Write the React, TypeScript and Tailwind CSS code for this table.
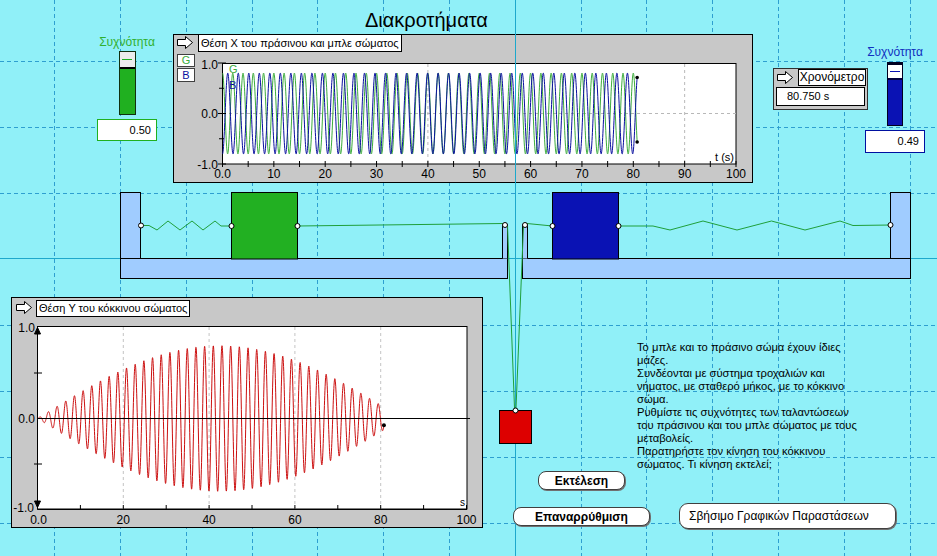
const T_END = 80.75;
const FG = 0.5;
const FB = 0.5 - 1 / 85;

const green = (t: number) => 0.8 * Math.cos(2 * Math.PI * FG * t);
const blue = (t: number) => -0.8 * Math.cos(2 * Math.PI * FB * t);
const red = (t: number) => -(green(t) + blue(t)) / 2;

// top chart, page coordinates
const tx = (t: number) => 222.5 + t * 5.135;
const ty = (v: number) => 113.5 - v * 50.5;
// bottom chart, page coordinates
const bx = (t: number) => 37.5 + t * 4.29;
const by = (v: number) => 418.5 - v * 91;

function trace(fn: (t: number) => number, px: (t: number) => number, py: (v: number) => number) {
  const pts: string[] = [];
  for (let i = 0; i <= 2019; i++) {
    const t = Math.min(i * 0.04, T_END);
    pts.push(`${px(t).toFixed(2)},${py(fn(t)).toFixed(2)}`);
  }
  return pts.join(" ");
}

const GRID_X = [54, 120, 186, 252, 317, 383, 449, 581, 646, 712, 778, 844, 910];
const GRID_Y = [61, 127, 193, 325, 391, 457, 523];

const FONT = "Liberation Sans, Arial, sans-serif";

function ArrowIcon() {
  return (
    <svg width="18" height="15" viewBox="0 0 18 15" className="shrink-0">
      <path d="M1.5 4.5H9.5V1.5L16.5 7.5L9.5 13.5V10.5H1.5Z" fill="white" stroke="black" />
    </svg>
  );
}

function BackgroundGrid() {
  return (
    <svg className="absolute inset-0" width={937} height={556}>
      {GRID_X.map((x) => (
        <line key={x} x1={x + 0.5} x2={x + 0.5} y1={0} y2={556} stroke="#2e9fd0" strokeDasharray="4 3" />
      ))}
      {GRID_Y.map((y) => (
        <line key={y} x1={0} x2={937} y1={y + 0.5} y2={y + 0.5} stroke="#2e9fd0" strokeDasharray="4 3" />
      ))}
    </svg>
  );
}

function Mechanism() {
  const joint = (x: number, y: number) => (
    <circle key={`${x}-${y}`} cx={x} cy={y} r={2.5} fill="white" stroke="black" />
  );
  return (
    <svg className="pointer-events-none absolute inset-0" width={937} height={556}>
      <line x1={0} x2={937} y1={258.5} y2={258.5} stroke="#1ea8cc" />
      <line x1={515.5} x2={515.5} y1={0} y2={556} stroke="#1ea8cc" />

      <rect x={120.5} y={258.5} width={387} height={20} fill="#a0ccff" stroke="black" />
      <rect x={522.5} y={258.5} width={388} height={20} fill="#a0ccff" stroke="black" />
      <rect x={120.5} y={192.5} width={20} height={66} fill="#a0ccff" stroke="black" />
      <rect x={890.5} y={192.5} width={20} height={66} fill="#a0ccff" stroke="black" />
      <path d="M502.5 258.5V226A2.5 2.5 0 0 1 507.5 226V258.5" fill="#a0ccff" stroke="black" />
      <path d="M522.5 258.5V226A2.5 2.5 0 0 1 527.5 226V258.5" fill="#a0ccff" stroke="black" />

      <rect x={231.5} y={192.5} width={66} height={66.5} fill="#22b022" stroke="black" />
      <rect x={552.5} y={192.5} width={66} height={66.5} fill="#0a12b4" stroke="black" />
      <rect x={499.5} y={410.5} width={32} height={33} fill="#dd0000" stroke="black" />

      <g fill="none" stroke="#1f9f3a">
        <polyline points="141,225.5 149,225.5 157,230 168,221 180,230 192,221 203,230 215,221 221,226 231,226" />
        <polyline points="297.5,226 503,223.5" />
        <polyline points="507.5,225.5 514.5,408" />
        <polyline points="552.5,226 527,223.5" />
        <polyline points="523.5,225.5 516,408" />
        <polyline points="618.5,226 653,226 670,230 703,221 737,230 771.5,221 805,230 840,221 853,225.5 890.5,225" />
      </g>

      {joint(141, 225.5)}
      {joint(231.5, 226)}
      {joint(297.5, 226)}
      {joint(505, 225)}
      {joint(525, 225)}
      {joint(552.5, 226)}
      {joint(618.5, 226)}
      {joint(890.5, 225)}
      {joint(515.5, 410.5)}
    </svg>
  );
}

function TopChart() {
  const gPts = trace(green, tx, ty);
  const bPts = trace(blue, tx, ty);
  const xTicks = Array.from({ length: 21 }, (_, i) => i * 5);
  const xLabels = [0, 10, 20, 30, 40, 50, 60, 70, 80, 90, 100];
  return (
    <div className="absolute left-[173px] top-[34px] h-[149px] w-[580px] border border-black bg-[#c8c8c8]">
      <svg className="absolute left-[-1px] top-[-1px]" width={580} height={149} viewBox="173 34 580 149">
        <rect x={222.5} y={63.5} width={513.5} height={100.5} fill="white" stroke="black" />
        <g stroke="#b8b8b8" strokeDasharray="3 3">
          <line x1={tx(40)} x2={tx(40)} y1={64} y2={164} />
          <line x1={tx(90)} x2={tx(90)} y1={64} y2={164} />
          <line x1={223} x2={736} y1={113.5} y2={113.5} />
        </g>
        <polyline points={gPts} fill="none" stroke="#3cac3c" />
        <polyline points={bPts} fill="none" stroke="#0a10a0" />
        <circle cx={tx(T_END)} cy={ty(green(T_END))} r={1.8} fill="black" />
        <circle cx={tx(T_END)} cy={ty(blue(T_END))} r={1.8} fill="black" />
        <g stroke="black">
          {[1, 0, -1].map((v) => (
            <line key={v} x1={218} x2={226} y1={ty(v)} y2={ty(v)} />
          ))}
          {[0.5, -0.5].map((v) => (
            <line key={v} x1={219} x2={224} y1={ty(v)} y2={ty(v)} />
          ))}
          {xTicks.map((t) => (
            <line key={t} x1={tx(t)} x2={tx(t)} y1={161} y2={167} />
          ))}
        </g>
        <g fontFamily={FONT} fontSize={12}>
          <text x={218} y={68.5} textAnchor="end">1.0</text>
          <text x={218} y={118} textAnchor="end">0.0</text>
          <text x={218} y={169} textAnchor="end">-1.0</text>
          {xLabels.map((t) => (
            <text key={t} x={tx(t)} y={178} textAnchor="middle">
              {t === 0 ? "0.0" : t}
            </text>
          ))}
          <text x={734} y={161} textAnchor="end" fontSize={11}>t (s)</text>
          <text x={229} y={73} fill="#3cac3c" fontSize={11}>G</text>
          <text x={229} y={89} fill="#0a10a0" fontSize={11}>B</text>
        </g>
      </svg>

      <div className="relative -mt-px flex items-start gap-[4px] pl-[2px]">
        <div className="pt-px">
          <ArrowIcon />
        </div>
        <div className="h-[18px] whitespace-nowrap border border-black bg-white px-[2px] text-[11px] leading-[16px]">
          Θέση X του πράσινου και μπλε σώματος
        </div>
      </div>
      <div className="relative ml-[3px] mt-[2px] flex w-[18px] flex-col gap-px text-center text-[11px]">
        <div className="h-[13px] border border-[#404040] bg-white leading-[11px] text-[#3cac3c]">G</div>
        <div className="h-[14px] border border-[#404040] bg-white leading-[12px] text-[#0a10a0]">B</div>
      </div>
    </div>
  );
}

function BottomChart() {
  const rPts = trace(red, bx, by);
  const xTicks = Array.from({ length: 11 }, (_, i) => i * 10);
  const xLabels = [0, 20, 40, 60, 80, 100];
  return (
    <div className="absolute left-[11px] top-[297px] h-[231px] w-[472px] border border-black bg-[#c8c8c8]">
      <svg className="absolute left-[-1px] top-[-1px]" width={472} height={231} viewBox="11 297 472 231">
        <rect x={37.5} y={326.5} width={429.5} height={182.5} fill="white" stroke="black" />
        <g stroke="#c4c4c4" strokeDasharray="3 3">
          {[20, 40, 60, 80].map((t) => (
            <line key={t} x1={bx(t)} x2={bx(t)} y1={327} y2={509} />
          ))}
        </g>
        <polyline points={rPts} fill="none" stroke="#cc1010" />
        <circle cx={bx(T_END)} cy={by(red(T_END))} r={2} fill="black" />
        <g stroke="black" fill="black">
          <line x1={37.5} x2={37.5} y1={327} y2={509} />
          <path d="M34.5 334L37.5 327.5L40.5 334Z" />
          <path d="M34.5 501L37.5 507.5L40.5 501Z" />
          <line x1={37.5} x2={470} y1={418.5} y2={418.5} />
          <line x1={37.5} x2={467} y1={509.5} y2={509.5} />
          {[0.5, -0.5].map((v) => (
            <line key={v} x1={34} x2={42} y1={by(v)} y2={by(v)} />
          ))}
          {xTicks.map((t) => (
            <line key={t} x1={bx(t)} x2={bx(t)} y1={505} y2={509.5} />
          ))}
        </g>
        <g fontFamily={FONT} fontSize={12}>
          <text x={35} y={332} textAnchor="end">1.0</text>
          <text x={35} y={422.5} textAnchor="end">0.0</text>
          <text x={34} y={512} textAnchor="end">-1.0</text>
          {xLabels.map((t) => (
            <text key={t} x={t === 0 ? bx(t) + 1 : bx(t)} y={524} textAnchor="middle">
              {t === 0 ? "0.0" : t}
            </text>
          ))}
          <text x={465} y={506} textAnchor="end" fontSize={10}>s</text>
        </g>
      </svg>

      <div className="relative flex items-start gap-[3px] pl-[3px] pt-[2px]">
        <ArrowIcon />
        <div className="h-[17px] whitespace-nowrap border border-black bg-white px-[2px] text-[11px] leading-[15px]">
          Θέση Y του κόκκινου σώματος
        </div>
      </div>
    </div>
  );
}

function Timer() {
  return (
    <div className="absolute left-[773px] top-[68px] flex h-[42px] w-[95px] flex-col gap-px border border-[#303030] bg-[#c8c8c8] pl-[2px]">
      <div className="flex items-start gap-[4px]">
        <div className="pt-px">
          <ArrowIcon />
        </div>
        <div className="h-[17px] w-[68px] border border-black bg-white text-center text-[12px] leading-[15px]">
          Χρονόμετρο
        </div>
      </div>
      <div className="h-[19px] w-[89px] border border-black bg-white pl-[10px] text-[11px] leading-[17px]">
        80.750 s
      </div>
    </div>
  );
}

function FreqSlider({ value, tone }: { value: string; tone: "green" | "blue" }) {
  const isGreen = tone === "green";
  return (
    <div className="flex w-[60px] flex-col items-center">
      <span className={isGreen ? "text-[12px] leading-[14px] text-[#30b030]" : "text-[12px] leading-[14px] text-[#1030c0]"}>
        Συχνότητα
      </span>
      {isGreen ? (
        <div className="mt-[2px] flex h-[64px] w-[17px] flex-col border border-[#103010] bg-[#20b020]">
          <div className="flex h-[17px] items-center justify-center border-b-2 border-black bg-[#ececec]">
            <span className="h-px w-[10px] bg-[#20b020]" />
          </div>
        </div>
      ) : (
        <div className="mt-[3px] flex h-[64px] w-[16px] flex-col border border-t-[3px] border-[#000020] bg-[#0a12b4]">
          <div className="flex h-[15px] items-center justify-center border-b-2 border-[#000040] bg-white">
            <span className="h-px w-[10px] bg-[#0a12b4]" />
          </div>
        </div>
      )}
      <div
        className={
          isGreen
            ? "mt-[4px] h-[22px] w-[60px] border border-[#20b020] bg-white pr-[5px] text-right text-[11px] leading-[20px]"
            : "mt-[4px] h-[23px] w-[60px] border border-[#0010a0] bg-white pr-[5px] text-right text-[11px] leading-[21px]"
        }
      >
        {value}
      </div>
    </div>
  );
}

const LINES = [
  "Το μπλε και το πράσινο σώμα έχουν ίδιες",
  "μάζες.",
  "Συνδέονται με σύστημα τροχαλιών και",
  "νήματος, με σταθερό μήκος, με το κόκκινο",
  "σώμα.",
  "Ρυθμίστε τις συχνότητες των ταλαντώσεων",
  "του πράσινου και του μπλε σώματος με τους",
  "μεταβολείς.",
  "Παρατηρήστε τον κίνηση του κόκκινου",
  "σώματος. Τι κίνηση εκτελεί;",
];

const BUTTON = "rounded-[8px] border border-[#404040] bg-white text-[12px] shadow-[1px_1px_0_#707070]";

export default function App() {
  return (
    <div className="relative h-[556px] w-[937px] overflow-hidden bg-[#90f0f8] font-['Liberation_Sans',Arial,sans-serif] text-black">
      <BackgroundGrid />

      <h1 className="absolute left-[365px] top-[8px] text-[20px] leading-[24px]">Διακροτήματα</h1>

      <div className="absolute left-[97px] top-[35px]">
        <FreqSlider value="0.50" tone="green" />
      </div>
      <div className="absolute left-[865px] top-[45px]">
        <FreqSlider value="0.49" tone="blue" />
      </div>

      <TopChart />
      <Timer />
      <BottomChart />

      <div className="absolute left-[637px] top-[341px] flex flex-col whitespace-nowrap text-[11.2px] leading-[13px]">
        {LINES.map((line) => (
          <span key={line}>{line}</span>
        ))}
      </div>

      <Mechanism />

      <button className={`absolute left-[538px] top-[471px] h-[19px] w-[87px] font-bold leading-[16px] ${BUTTON}`}>
        Εκτέλεση
      </button>
      <button className={`absolute left-[513px] top-[507px] h-[19px] w-[137px] font-bold leading-[16px] ${BUTTON}`}>
        Επαναρρύθμιση
      </button>
      <button className={`absolute left-[679px] top-[503px] h-[26px] w-[217px] rounded-[9px] pl-[9px] text-left text-[11.5px] leading-[22px] ${BUTTON}`}>
        Σβήσιμο Γραφικών Παραστάσεων
      </button>
    </div>
  );
}
